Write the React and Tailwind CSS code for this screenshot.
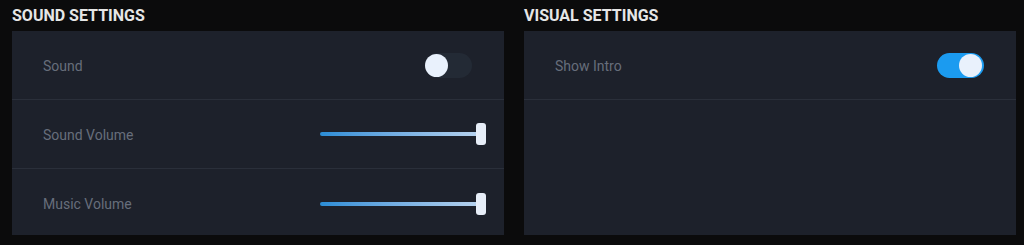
import React from 'react';

const Toggle = ({ on }) => (
  <div className={`relative w-[47px] h-[25px] rounded-full ${on ? 'bg-[#1b9bf0]' : 'bg-[#232a35]'}`}>
    <div
      className={`absolute top-[1px] w-[23px] h-[23px] rounded-full bg-[#e9f1fc] ${on ? 'right-[2px]' : 'left-0'}`}
    />
  </div>
);

const Slider = () => (
  <div className="relative w-[166px] h-[22px] flex items-center">
    <div className="w-full h-1 rounded-full bg-gradient-to-r from-[#2a8dd6] to-[#bcd5ef]" />
    <div className="absolute right-0 top-0 w-[10px] h-[22px] rounded-[3px] bg-[#e7eef8]" />
  </div>
);

const Row = ({ label, children, last, slider }) => (
  <div
    className={`flex items-center justify-between pl-[31px] ${slider ? 'pr-[18px]' : 'pr-[32px]'} ${
      last ? 'h-[66px] pt-[3px]' : 'h-[69px] border-b border-[#2a2f3a]'
    }`}
  >
    <span className="text-[14px] text-[#676e7b] pt-[2px]">{label}</span>
    {children}
  </div>
);

const Section = ({ title, children }) => (
  <div className="w-[492px] flex flex-col">
    <h2 className="h-[31px] flex items-center text-[16px] font-bold text-[#e6e6e6]">{title}</h2>
    <div className="h-[204px] bg-[#1d212b]">{children}</div>
  </div>
);

export default function App() {
  return (
    <div
      className="w-[1024px] h-[245px] bg-[#0b0b0c] flex gap-5 pl-3 pr-2"
      style={{ fontFamily: 'Roboto, "Liberation Sans", sans-serif' }}
    >
      <Section title="SOUND SETTINGS">
        <Row label="Sound">
          <Toggle on={false} />
        </Row>
        <Row label="Sound Volume" slider>
          <Slider />
        </Row>
        <Row label="Music Volume" slider last>
          <Slider />
        </Row>
      </Section>
      <Section title="VISUAL SETTINGS">
        <Row label="Show Intro">
          <Toggle on />
        </Row>
      </Section>
    </div>
  );
}
